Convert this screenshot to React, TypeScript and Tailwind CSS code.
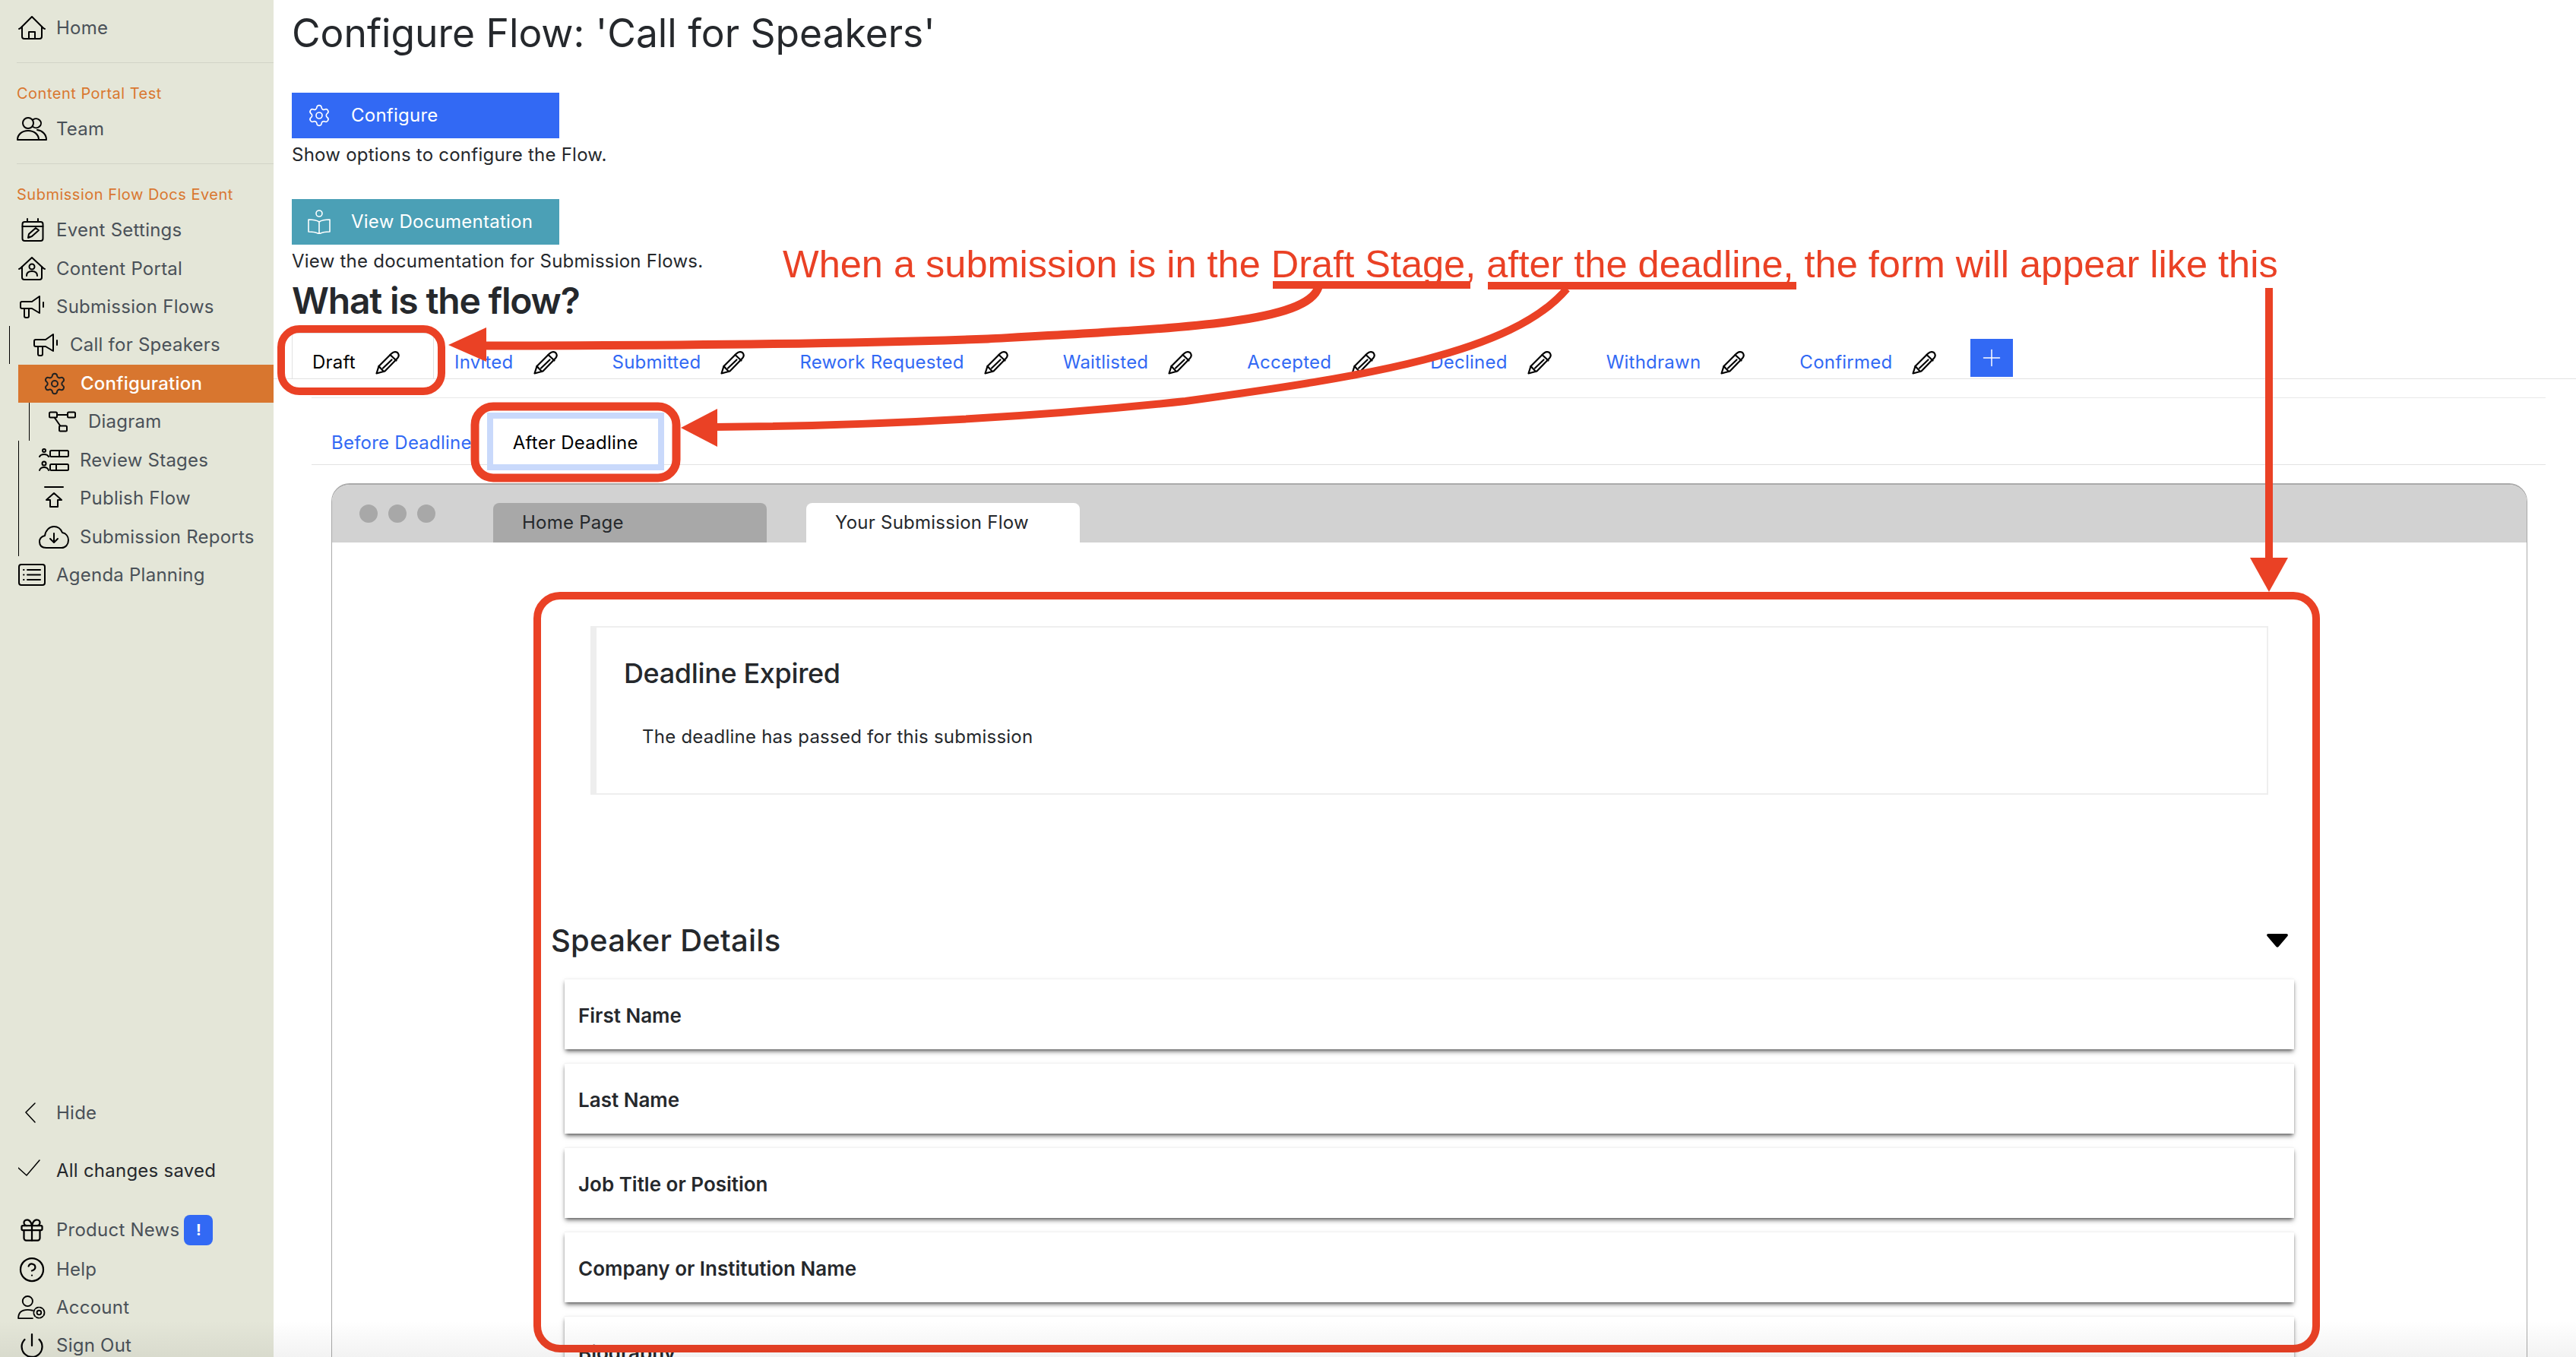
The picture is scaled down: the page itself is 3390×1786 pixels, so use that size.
import React from "react";
import { Settings, Gift, CircleHelp, Power, Plus } from "lucide-react";

const ic = { fill: "none", stroke: "currentColor", strokeWidth: 2, strokeLinecap: "round", strokeLinejoin: "round" } as const;

function HomeIcon() {
  return (
    <svg viewBox="0 0 36 32" className="w-9 h-8 text-black" {...ic}>
      <path d="M1 17c1 0 2-1 3-2L18 1l14 14c1 1 2 2 3 2" />
      <path d="M5 14v13c0 2 1 3 3 3h20c2 0 3-1 3-3V14" />
      <path d="M14 30v-9h8v9" />
    </svg>
  );
}
function TeamIcon() {
  return (
    <svg viewBox="0 0 40 32" className="w-10 h-8 text-black -ml-0.5" {...ic}>
      <circle cx="15" cy="8" r="7" />
      <path d="M21.500 3.500A6.500 6 0 1 1 21.500 13" />
      <path d="M1 30C1 23 7 18 15 18C23 18 29 23 29 30Z" />
      <path d="M27 17C34 18 39 23 39 30H29" />
    </svg>
  );
}
function CalendarIcon() {
  return (
    <svg viewBox="0 0 30 32" className="w-7.5 h-8 text-black" {...ic}>
      <rect x="1.500" y="5" width="27" height="25" rx="3" />
      <path d="M1.500 11h27M8 1v4M22 1v4" />
      <path d="M9 26l1-5 9-8 4 3-9 8z" />
    </svg>
  );
}
function PortalIcon() {
  return (
    <svg viewBox="0 0 36 32" className="w-9 h-8 text-black" {...ic}>
      <path d="M1 16c1 0 2-1 3-2L18 1l14 13c1 1 2 2 3 2" />
      <path d="M5 13v14c0 2 1 3 3 3h20c2 0 3-1 3-3V13" />
      <circle cx="18" cy="13" r="3.500" />
      <path d="M11 25c0-4 3-6 7-6s7 2 7 6" />
    </svg>
  );
}
function MegaIcon() {
  return (
    <svg viewBox="0 0 32 32" className="w-8 h-8 text-black" {...ic}>
      <path d="M7 9h9L26 2v22l-10-6H3c-1 0-2-1-2-2v-5c0-1 1-2 2-2z" />
      <path d="M6 18v10c0 1 1 2 2 2h2c1 0 2-1 2-2V18" />
      <path d="M31 10v6" />
    </svg>
  );
}
function DiagramIcon() {
  return (
    <svg viewBox="0 0 36 28" className="w-9 h-7 text-black" {...ic}>
      <rect x="1" y="1.500" width="10" height="7" rx="1.500" />
      <rect x="25" y="1.500" width="10" height="7" rx="1.500" />
      <rect x="14" y="19.500" width="10" height="7" rx="1.500" />
      <path d="M11 5h14M8 9l7 10" />
    </svg>
  );
}
function StagesIcon() {
  return (
    <svg viewBox="0 0 40 32" className="w-10 h-8 text-black" {...ic}>
      <circle cx="7" cy="3" r="2" />
      <path d="M1 11c1-2 3-3 6-3s5 1 6 3" />
      <circle cx="7" cy="20" r="2.500" />
      <path d="M1 29c1-3 3-4 6-4s5 1 6 4" />
      <rect x="15" y="3" width="24" height="8" rx="1.500" />
      <path d="M27 3v8" />
      <rect x="15" y="21" width="24" height="8" rx="1.500" />
      <path d="M23 21v8" />
    </svg>
  );
}
function PublishIcon() {
  return (
    <svg viewBox="0 0 26 32" className="w-6.5 h-8 text-black" {...ic}>
      <path d="M1 1h24" />
      <path d="M13 9l10 9h-5v9h-10v-9h-5z" />
    </svg>
  );
}
function CloudIcon() {
  return (
    <svg viewBox="0 0 40 32" className="w-10 h-8 text-black" {...ic}>
      <path d="M10 30C4 30 1 27 1 22s3-7 7-8c1-7 6-12 12-12 5 0 9 3 11 8 5 1 8 5 8 10 0 6-4 10-9 10z" />
      <path d="M20 11v11M15 18l5 5 5-5" />
    </svg>
  );
}
function AgendaIcon() {
  return (
    <svg viewBox="0 0 36 30" className="w-9 h-7.5 text-black" {...ic}>
      <rect x="1" y="1" width="34" height="27" rx="3" />
      <path d="M7 8h.5M7 14.500h.5M7 21h.5M12 8h17M12 14.500h17M12 21h17" />
    </svg>
  );
}
function ChevronIcon() {
  return (
    <svg viewBox="0 0 36 28" className="w-9 h-7 text-black" fill="none" stroke="currentColor" strokeWidth="1.500" strokeLinecap="round">
      <path d="M22 1L10 13l12 13" />
    </svg>
  );
}
function CheckIcon() {
  return (
    <svg viewBox="0 0 36 22" className="w-9 h-6 text-black -mt-2" fill="none" stroke="currentColor" strokeWidth="1.500" strokeLinecap="round">
      <path d="M0 11l11 10L28 1" />
    </svg>
  );
}
function AccountIcon() {
  return (
    <svg viewBox="0 0 40 34" className="w-10 h-8 text-black -ml-0.5" {...ic}>
      <circle cx="14" cy="8" r="7" />
      <path d="M1 32c0-8 4-12 13-12 3 0 5 .5 7 1M1 32h20" />
      <circle cx="30" cy="24" r="3" />
      <circle cx="30" cy="24" r="7.500" strokeDasharray="4 2" />
    </svg>
  );
}
function PencilIcon() {
  return (
    <svg viewBox="0 0 32 32" className="w-8 h-8 text-black shrink-0" fill="none" stroke="currentColor" strokeWidth="2.200" strokeLinejoin="round" strokeLinecap="round">
      <path d="M1.500 30.500L4.500 21L21 4.500Q25 .5 29 3Q32.500 6.500 29 10.500L12.500 27.500Z" />
      <path d="M19.500 6L27.500 13.500M10 23.500L21.500 12.500M4.500 21L11 28" />
    </svg>
  );
}
function BookIcon() {
  return (
    <svg viewBox="0 0 32 32" className="w-8 h-8 text-white" fill="none" stroke="currentColor" strokeWidth="1.600" strokeLinejoin="round">
      <circle cx="16" cy="5" r="4" />
      <path d="M16 16c-3-2-8-3-14-3v16c6 0 11 1 14 3 3-2 8-3 14-3V13c-6 0-11 1-14 3zM16 16v16" />
    </svg>
  );
}

const rowText = "text-2xl text-[#4a5158] whitespace-nowrap";

function Row({ icon, label, className }: { icon: React.ReactNode; label: string; className: string }) {
  return (
    <div className={"relative h-12.5 flex items-center " + className}>
      {icon}
      <span className={rowText}>{label}</span>
    </div>
  );
}

function Sidebar() {
  return (
    <aside className="w-90 h-screen shrink-0 flex flex-col bg-[#e4e6d8] overflow-hidden">
      <Row icon={<HomeIcon />} label="Home" className="pl-6 gap-3.5 mt-3" />
      <div className="ml-5.5 mt-5 border-t border-[#d2d4c7]" />
      <div className="ml-5.5 mt-6.5 text-xl leading-7 tracking-wide text-[#d97730] whitespace-nowrap">Content Portal Test</div>
      <Row icon={<TeamIcon />} label="Team" className="pl-6 gap-3 mt-2" />
      <div className="ml-5.5 mt-5 border-t border-[#d2d4c7]" />
      <div className="ml-5.5 mt-6.5 text-xl leading-7 tracking-wide text-[#d97730] whitespace-nowrap">Submission Flow Docs Event</div>
      <Row icon={<CalendarIcon />} label="Event Settings" className="pl-7 gap-4 mt-2" />
      <Row icon={<PortalIcon />} label="Content Portal" className="pl-6 gap-3.5 mt-px" />
      <Row icon={<MegaIcon />} label="Submission Flows" className="pl-6.5 gap-4" />
      <Row
        icon={
          <>
            <span className="absolute left-3 inset-y-0 w-px bg-black" />
            <MegaIcon />
          </>
        }
        label="Call for Speakers"
        className="pl-11 gap-4"
      />
      <div className="ml-6 mt-px h-12.5 pl-8 gap-4.5 flex items-center bg-[#d8762f]">
        <Settings className="w-8 h-8 text-[#222]" strokeWidth={1.5} />
        <span className="text-2xl font-medium text-white whitespace-nowrap">Configuration</span>
      </div>
      <Row
        icon={
          <>
            <span className="absolute left-9.5 inset-y-0 w-px bg-black" />
            <DiagramIcon />
          </>
        }
        label="Diagram"
        className="pl-16 gap-4"
      />
      <div className="ml-6 pt-px border-l border-black">
        <Row icon={<StagesIcon />} label="Review Stages" className="pl-6.5 gap-3.5" />
        <Row icon={<span className="w-10 flex justify-center"><PublishIcon /></span>} label="Publish Flow" className="pl-6.5 gap-3.5" />
        <Row icon={<CloudIcon />} label="Submission Reports" className="pl-6.5 gap-3.5 mt-px" />
      </div>
      <Row icon={<AgendaIcon />} label="Agenda Planning" className="pl-6 gap-3.5" />

      <div className="mt-auto -mb-2.5 flex flex-col">
        <Row icon={<ChevronIcon />} label="Hide" className="pl-6 gap-3.5" />
        <div className="relative mt-6.5 h-12.5 pl-6 gap-3.5 flex items-center">
          <CheckIcon />
          <span className="text-2xl text-[#25282c] whitespace-nowrap">All changes saved</span>
        </div>
        <div className="relative mt-7 h-12.5 pl-6 gap-3.5 flex items-center">
          <span className="w-9 flex justify-center"><Gift className="w-9 h-9 text-black" strokeWidth={1.5} /></span>
          <span className={rowText}>Product News</span>
          <span className="-ml-2 w-9.5 h-10 rounded-lg bg-[#3269f4] text-white font-bold text-xl flex items-center justify-center">!</span>
        </div>
        <Row icon={<span className="w-9 flex justify-center"><CircleHelp className="w-9 h-9 text-black" strokeWidth={1.5} /></span>} label="Help" className="pl-6 gap-3.5 mt-0.5" />
        <Row icon={<AccountIcon />} label="Account" className="pl-6 gap-3" />
        <Row icon={<span className="w-9 flex justify-center"><Power className="w-9 h-9 text-black" strokeWidth={1.5} /></span>} label="Sign Out" className="pl-6 gap-3.5" />
      </div>
    </aside>
  );
}

function Tab({ label, active }: { label: string; active?: boolean }) {
  return (
    <div
      className={
        "h-15 pt-4 pl-6.5 pr-11 flex items-center gap-6.5 border-x border-t whitespace-nowrap text-2xl " +
        (active ? "border-[#e2e2e2] bg-white text-black" : "border-transparent text-[#3269f4]")
      }
    >
      <span>{label}</span>
      <PencilIcon />
    </div>
  );
}

const tabs = ["Invited", "Submitted", "Rework Requested", "Waitlisted", "Accepted", "Declined", "Withdrawn", "Confirmed"];
const fields = ["First Name", "Last Name", "Job Title or Position", "Company or Institution Name", "Biography"];

function Main() {
  return (
    <main className="flex-1 min-w-0 h-screen overflow-hidden pt-4 text-[#25282c]">
      <div className="pl-6 pr-7">
        <h1 className="h-14 flex items-center text-[51.500px] tracking-normal whitespace-nowrap">Configure Flow: 'Call for Speakers'</h1>
        <div className="mt-12.5 w-88 h-15 bg-[#3269f4] pl-5 gap-6.5 flex items-center text-2xl text-white">
          <Settings className="w-8 h-8" strokeWidth={1.25} />
          <span>Configure</span>
        </div>
        <p className="mt-1.5 text-2xl">Show options to configure the Flow.</p>
        <div className="mt-10.5 w-88 h-15 bg-[#4ba0b6] pl-5 gap-6.5 flex items-center text-2xl text-white">
          <BookIcon />
          <span>View Documentation</span>
        </div>
        <p className="mt-1.5 text-2xl">View the documentation for Submission Flows.</p>
        <h2 className="mt-3 text-5xl font-semibold tracking-tight whitespace-nowrap">What is the flow?</h2>
      </div>

      <div className="mt-4.5 pl-6 flex items-end border-b border-[#e2e2e2]">
        <Tab label="Draft" active />
        {tabs.map((t) => (
          <Tab key={t} label={t} />
        ))}
        <div className="w-14 h-12.5 mb-0.5 bg-[#3269f4] flex items-center justify-center">
          <Plus className="w-9 h-9 text-white" strokeWidth={1} />
        </div>
      </div>

      <div className="ml-12.5 mr-10 mt-6 border-t border-[#e8e8e8]">
        <div className="h-22 flex items-end border-b border-[#e2e2e2] text-2xl">
          <div className="h-15 pt-1 pl-6.5 pr-7 flex items-center text-[#3269f4] whitespace-nowrap">Before Deadline</div>
          <div className="relative h-15 pt-1 px-6.5 flex items-center bg-white text-black ring-8 ring-[#c9d9fb] whitespace-nowrap">After Deadline</div>
        </div>
      </div>

      <div className="ml-19 mr-16 mt-6 rounded-t-3xl border-x border-t-2 border-[#aaaaaa] overflow-hidden text-2xl">
        <div className="h-19 bg-[#d2d2d2] pl-9 flex items-end">
          <div className="self-center flex gap-3.5">
            <span className="w-6 h-6 rounded-full bg-[#a8a8a8]" />
            <span className="w-6 h-6 rounded-full bg-[#a8a8a8]" />
            <span className="w-6 h-6 rounded-full bg-[#a8a8a8]" />
          </div>
          <div className="ml-19 w-90 h-13 px-9.5 flex items-center rounded-t-lg bg-[#a8a8a8]">Home Page</div>
          <div className="ml-13 w-90 h-13 px-9.5 flex items-center rounded-t-lg bg-white">Your Submission Flow</div>
        </div>
        <div className="bg-white pt-27.5 pl-72 pr-75">
          <section className="ml-13 mr-10 border-l-8 border-y-2 border-r-2 border-[#eeeeee] pl-9 pt-10 pb-14.5">
            <h3 className="text-4xl font-medium tracking-[-0.01em]">Deadline Expired</h3>
            <p className="mt-12 ml-6">The deadline has passed for this submission</p>
          </section>
          <div className="mt-43 flex items-center justify-between">
            <h3 className="text-[40px] leading-10 font-medium whitespace-nowrap">Speaker Details</h3>
            <svg viewBox="0 0 28 18" className="w-7 h-4.5 mr-3.5 text-black" fill="currentColor">
              <path d="M2 0h24c2 0 2.500 2 1 3.500L15.500 17c-1 1-2 1-3 0L1 3.500C-.5 2 0 0 2 0z" />
            </svg>
          </div>
          <div className="mt-7.5 ml-4.5 mr-1.5 flex flex-col gap-4.5">
            {fields.map((f) => (
              <div key={f} className="bg-white border-t border-[#f3f3f3] pl-4.5 pt-8 pb-7 text-[26px] leading-8 tracking-normal font-semibold shadow-md shadow-black/50">
                {f}
              </div>
            ))}
          </div>
        </div>
      </div>
    </main>
  );
}

function Annotations() {
  const red = "#ea4125";
  return (
    <>
      <svg viewBox="0 0 3390 1786" className="absolute inset-0 w-full h-full pointer-events-none" fill="none">
        <rect x="370" y="433" width="211" height="82" rx="24" stroke={red} strokeWidth="10" />
        <rect x="625" y="535" width="265" height="94" rx="24" stroke={red} strokeWidth="11" />
        <rect x="707" y="784" width="2341" height="991" rx="30" stroke={red} strokeWidth="10" />
        <path d="M1675 375H1935M1958 376H2364" stroke={red} strokeWidth="10" />
        <path d="M1735 378C1720 425 1560 432 1300 446C1100 453 900 455 636 455" stroke={red} strokeWidth="11" />
        <path d="M590 454L640 431V476Z" fill={red} />
        <path d="M2062 380C1990 465 1800 495 1560 528C1400 545 1200 560 940 562" stroke={red} strokeWidth="10" />
        <path d="M896 563L944 538V588Z" fill={red} />
        <path d="M2986 379V740" stroke={red} strokeWidth="10" />
        <path d="M2961 734H3011L2986 779Z" fill={red} />
      </svg>
      <div className="absolute left-257.5 top-80 text-[50.500px] leading-14 tracking-normal text-[#ea4125] whitespace-nowrap font-['Liberation_Sans',sans-serif]">
        When a submission is in the Draft Stage, after the deadline, the form will appear like this
      </div>
    </>
  );
}

export default function App() {
  return (
    <div className="relative flex w-full h-screen overflow-hidden bg-white font-['Inter',sans-serif] tracking-[0.015em]">
      <Sidebar />
      <Main />
      <Annotations />
      <div className="absolute inset-x-0 bottom-0 h-12 bg-linear-to-b from-transparent to-black/5 pointer-events-none" />
    </div>
  );
}
